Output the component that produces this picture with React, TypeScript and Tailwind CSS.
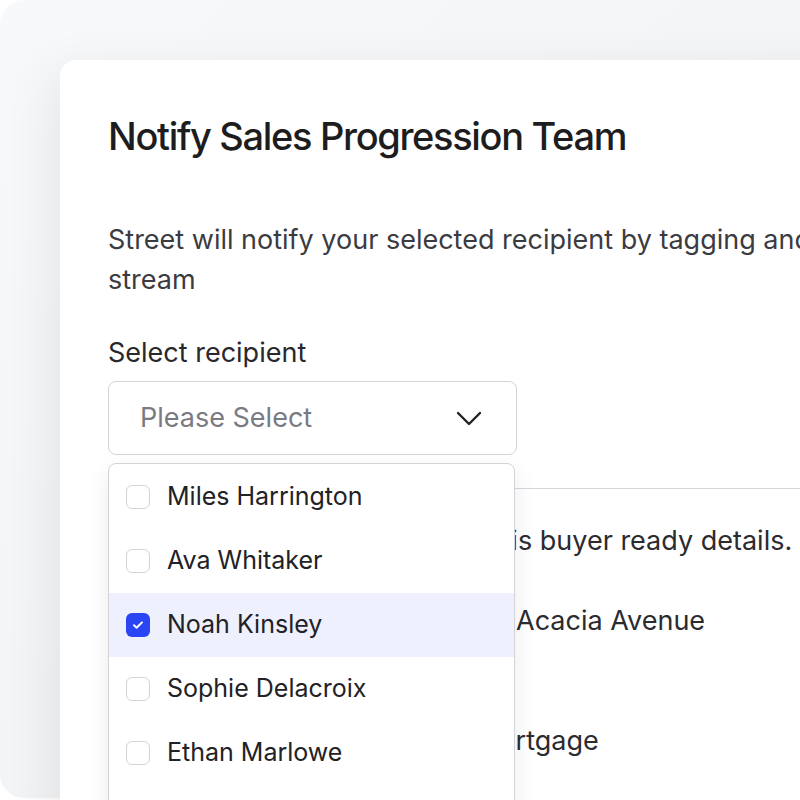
import React from "react";

const names = [
  { name: "Miles Harrington", checked: false },
  { name: "Ava Whitaker", checked: false },
  { name: "Noah Kinsley", checked: true },
  { name: "Sophie Delacroix", checked: false },
  { name: "Ethan Marlowe", checked: false },
  { name: "Olivia Brennan", checked: false },
];

function Check() {
  return (
    <svg width="14" height="14" viewBox="0 0 14 14" fill="none">
      <path d="M3 7.3l2.6 2.5L11 4.4" stroke="white" strokeWidth="2" strokeLinecap="round" strokeLinejoin="round" />
    </svg>
  );
}

export default function App() {
  return (
    <div className="w-[800px] h-[800px] bg-white overflow-hidden font-['Inter',sans-serif]">
      <div className="w-[1000px] h-[798px] rounded-[24px] bg-gradient-to-br from-[#f8f9fa] via-[#f3f4f6] to-[#eeeff1] pl-[60px] pt-[60px]">
        <div className="h-[800px] bg-white rounded-tl-[16px] shadow-[-10px_10px_50px_rgba(0,0,0,0.07)] pl-[48px] pt-[54px]">
          <h1 className="text-[38px] leading-[44px] font-medium tracking-[-0.035em] text-[#1d1d20] whitespace-nowrap">
            Notify Sales Progression Team
          </h1>
          <p className="mt-[62px] text-[27px] leading-[40px] text-[#3b3b41] w-[920px]">
            Street will notify your selected recipient by tagging and posting in the stream
          </p>
          <div className="mt-[37px] text-[27px] leading-[32px] text-[#28282d]">Select recipient</div>
          <div className="relative mt-[12px] w-[409px]">
            <div className="h-[74px] rounded-[8px] border-[1.5px] border-[#d3d3da] flex items-center justify-between pl-[31px] pr-[34px]">
              <span className="text-[27px] text-[#7a7a83]">Please Select</span>
              <svg width="26" height="16" viewBox="0 0 26 16" fill="none">
                <path d="M2 3l11 11L24 3" stroke="#222226" strokeWidth="2.4" strokeLinecap="round" strokeLinejoin="round" />
              </svg>
            </div>
            <div className="absolute left-0 top-[82px] w-[407px] bg-white border-[1.5px] border-[#d3d3da] rounded-t-[8px] pt-[1px] shadow-[0_8px_24px_rgba(0,0,0,0.08)] z-10">
              {names.map((n) => (
                <div
                  key={n.name}
                  className={`h-[64px] flex items-center pl-[17px] gap-[17px] ${n.checked ? "bg-[#eef0fd]" : ""}`}
                >
                  {n.checked ? (
                    <span className="w-[24px] h-[24px] rounded-[6px] bg-[#2a45f4] flex items-center justify-center">
                      <Check />
                    </span>
                  ) : (
                    <span className="w-[24px] h-[24px] rounded-[6px] border-[1.5px] border-[#d3d3da] bg-white" />
                  )}
                  <span className="text-[25px] text-[#222226]">{n.name}</span>
                </div>
              ))}
            </div>
          </div>
          <div className="mt-[33px] w-[800px] border-t-[1.5px] border-[#d6d6dc]">
            <p className="mt-[32px] ml-[24px] text-[27px] leading-[40px] text-[#2b2b30] whitespace-nowrap">
              The team will be notified of this buyer ready details.
            </p>
            <div className="mt-[40px] flex text-[27px] leading-[40px] text-[#2b2b30]">
              <span className="w-[373px]">Address</span>
              <span>12 Acacia Avenue</span>
            </div>
            <div className="mt-[80px] flex text-[27px] leading-[40px] text-[#2b2b30]">
              <span className="w-[367px]">Finance</span>
              <span>Mortgage</span>
            </div>
          </div>
        </div>
      </div>
    </div>
  );
}
